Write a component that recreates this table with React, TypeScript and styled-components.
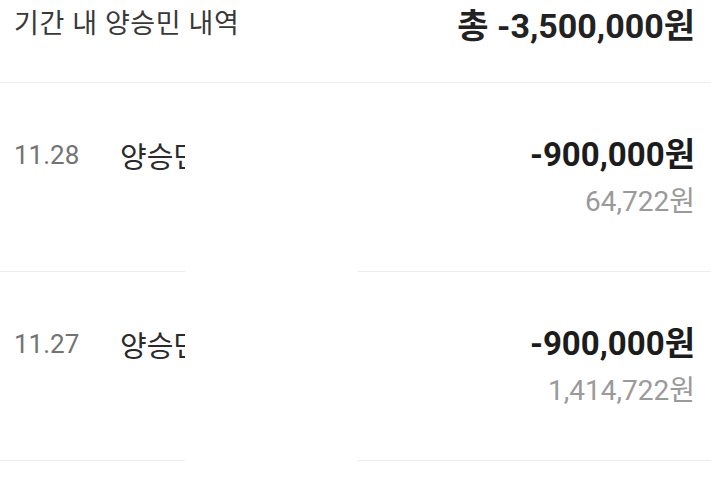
import styled, { createGlobalStyle } from 'styled-components';

const GlobalStyle = createGlobalStyle`
    html, body {
        margin: 0;
        padding: 0;
        background: #fff;
        overflow: hidden;
    }
    body {
        font-family: Roboto, "Noto Sans CJK KR", sans-serif;
    }
`;

const Page = styled.div`
    position: relative;
    width: 711px;
    height: 487px;
    overflow: hidden;
    background: #fff;
`;

const Header = styled.div`
    display: flex;
    justify-content: space-between;
    align-items: flex-start;
    height: 83px;
    box-sizing: border-box;
    padding: 4px 16px 0 14px;
    border-bottom: 1px solid #ececec;
`;

const Title = styled.div`
    font-size: 27px;
    line-height: 40px;
    letter-spacing: 0.6px;
    color: #383838;
`;

const Total = styled.div`
    font-size: 34px;
    line-height: 44px;
    font-weight: 700;
    color: #222;
`;

const Row = styled.div`
    display: flex;
    justify-content: space-between;
    align-items: flex-start;
    height: 189px;
    box-sizing: border-box;
    padding: 52px 16px 0 14px;
    border-bottom: 1px solid #ececec;
`;

const Left = styled.div`
    display: flex;
    align-items: center;
    height: 40px;
`;

const DateText = styled.span`
    width: 106px;
    font-size: 26px;
    color: #737373;
`;

const Name = styled.span`
    font-size: 29px;
    color: #2a2a2a;
`;

const Right = styled.div`
    display: flex;
    flex-direction: column;
    align-items: flex-end;
`;

const Amount = styled.div`
    font-size: 33px;
    line-height: 40px;
    font-weight: 700;
    color: #1c1c1c;
`;

const Balance = styled.div`
    margin-top: 11px;
    font-size: 28px;
    line-height: 32px;
    color: #9a9a9a;
`;

// white block hiding the rest of the names
const Censor = styled.div`
    position: absolute;
    left: 185px;
    top: 96px;
    width: 173px;
    bottom: 0;
    background: #fff;
`;

const rows = [
    { date: '11.28', name: '양승민', amount: '-900,000원', balance: '64,722원' },
    { date: '11.27', name: '양승민', amount: '-900,000원', balance: '1,414,722원' },
];

const App = () => {
    return (
        <Page>
            <GlobalStyle />
            <Header>
                <Title>기간 내 양승민 내역</Title>
                <Total>총 -3,500,000원</Total>
            </Header>
            {rows.map((r, i) => (
                <Row key={i}>
                    <Left>
                        <DateText>{r.date}</DateText>
                        <Name>{r.name}</Name>
                    </Left>
                    <Right>
                        <Amount>{r.amount}</Amount>
                        <Balance>{r.balance}</Balance>
                    </Right>
                </Row>
            ))}
            <Censor />
        </Page>
    );
};

export default App;
